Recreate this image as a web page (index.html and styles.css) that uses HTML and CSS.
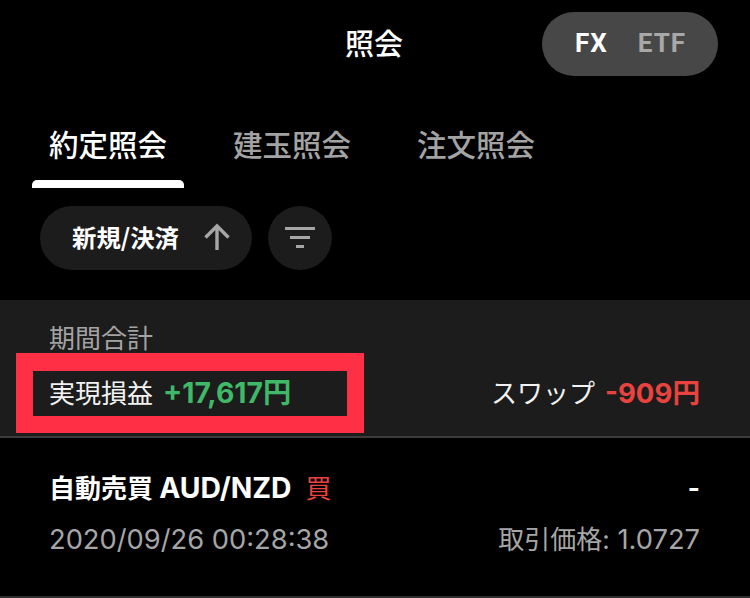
FILE: index.html
```html
<!DOCTYPE html>
<html lang="ja">
<head>
<meta charset="utf-8">
<title>照会</title>
<link rel="stylesheet" href="styles.css">
</head>
<body>
<div class="page">
  <header class="topbar">
    <h1 class="title">照会</h1>
    <div class="switch"><span class="switch-on">FX</span><span class="switch-off">ETF</span></div>
  </header>
  <nav class="tabs">
    <a class="tab tab-active">約定照会</a>
    <a class="tab">建玉照会</a>
    <a class="tab">注文照会</a>
  </nav>
  <div class="filters">
    <div class="chip">
      <span class="chip-label">新規/決済</span>
      <svg class="chip-arrow" width="30" height="30" viewBox="0 0 30 30" fill="none" stroke="#a6a6a6" stroke-width="3.400"><path d="M15 28V4M3.500 15.500 15 4l11.500 11.500"/></svg>
    </div>
    <div class="round">
      <svg width="32" height="24" viewBox="0 0 32 24" fill="#a6a6a6"><rect x="1" y="2" width="30" height="3"/><rect x="6" y="11" width="20" height="3"/><rect x="12" y="20" width="8" height="3"/></svg>
    </div>
  </div>
  <section class="summary">
    <div class="summary-label">期間合計</div>
    <div class="summary-row">
      <div class="pair"><span class="pair-label">実現損益</span><span class="amount plus">+17,617円</span></div>
      <div class="pair"><span class="pair-label">スワップ</span><span class="amount minus">-909円</span></div>
    </div>
    <div class="highlight"></div>
  </section>
  <section class="trade">
    <div class="trade-row">
      <div class="trade-name">自動売買 <span class="trade-pair">AUD/NZD</span><span class="side">買</span></div>
      <div class="trade-name">-</div>
    </div>
    <div class="trade-row trade-sub">
      <div>2020/09/26 00:28:38</div>
      <div><span class="price-label">取引価格:</span> 1.0727</div>
    </div>
  </section>
</div>
</body>
</html>
```
FILE: styles.css
```css
* { box-sizing: border-box; }
html, body { margin: 0; background: #000; }
body { font-family: Inter, "Noto Sans CJK JP", sans-serif; color: #fff; }
.page { width: 750px; height: 598px; overflow: hidden; }

.topbar { height: 112px; padding: 12px 32px 0 0; display: flex; justify-content: flex-end; align-items: flex-start; position: relative; }
.title { position: absolute; left: 0; right: 2px; top: 21px; margin: 0; text-align: center; font-size: 29px; line-height: 42px; font-weight: 500; font-family: "Noto Sans CJK JP", sans-serif; }
.switch { width: 176px; height: 64px; border-radius: 32px; background: #474747; display: flex; align-items: center; gap: 30px; padding: 0 0 2px 33px; font-family: Roboto, "Liberation Sans", sans-serif; font-size: 26px; font-weight: 700; letter-spacing: 1px; }
.switch-on { color: #fff; }
.switch-off { color: #a8a8a8; }

.tabs { display: flex; gap: 32px; padding-left: 32px; height: 76px; }
.tab { width: 152px; height: 76px; text-align: center; font-size: 29.500px; line-height: 62px; font-weight: 500; color: #a3a3a3; font-family: "Noto Sans CJK JP", sans-serif; }
.tab-active { color: #fff; position: relative; }
.tab-active::after { content: ""; position: absolute; left: 0; right: 0; bottom: 0; height: 8px; background: #fff; border-radius: 5px 5px 0 0; }

.filters { display: flex; gap: 16px; padding: 18px 0 0 40px; height: 112px; }
.chip { width: 212px; height: 64px; border-radius: 32px; background: #1c1c1c; display: flex; align-items: center; padding-left: 32px; gap: 23px; }
.chip-label { font-size: 24.400px; font-weight: 700; margin-top: -4px; font-family: "Noto Sans CJK JP", sans-serif; }
.chip-arrow { margin-top: -3px; }
.round { width: 64px; height: 64px; border-radius: 50%; background: #1c1c1c; display: flex; align-items: center; justify-content: center; }
.round svg { margin-top: -2px; }

.summary { height: 138px; background: #1c1c1c; border-bottom: 2px solid #3c3c3c; padding: 21px 50px 0 49px; position: relative; }
.summary-label { font-size: 26px; line-height: 36px; color: #a3a3a3; }
.summary-row { display: flex; justify-content: space-between; margin-top: 18px; }
.pair { display: flex; align-items: baseline; gap: 10px; line-height: 36px; }
.pair-label { font-size: 26px; color: #f2f2f2; margin-top: -4px; }
.amount { font-weight: 700; }
.plus { font-size: 28.300px; color: #3fb868; }
.minus { font-size: 27.600px; color: #e8433f; }
.highlight { position: absolute; left: 16px; top: 53px; width: 348px; height: 80px; border: 17px solid #ff2f45; border-top-width: 18px; }

.trade { padding: 32px 50px 0 49px; height: 160px; border-bottom: 2px solid #2e2e2e; }
.trade-row { display: flex; justify-content: space-between; }
.trade-name { font-size: 26px; line-height: 36px; font-weight: 700; }
.trade-pair { font-size: 28.300px; }
.side { font-size: 26px; font-weight: 400; color: #e8433f; margin-left: 14px; }
.trade-sub { margin-top: 15px; font-size: 27.300px; line-height: 36px; color: #a6a6a6; }
.price-label { font-size: 26px; }
```
